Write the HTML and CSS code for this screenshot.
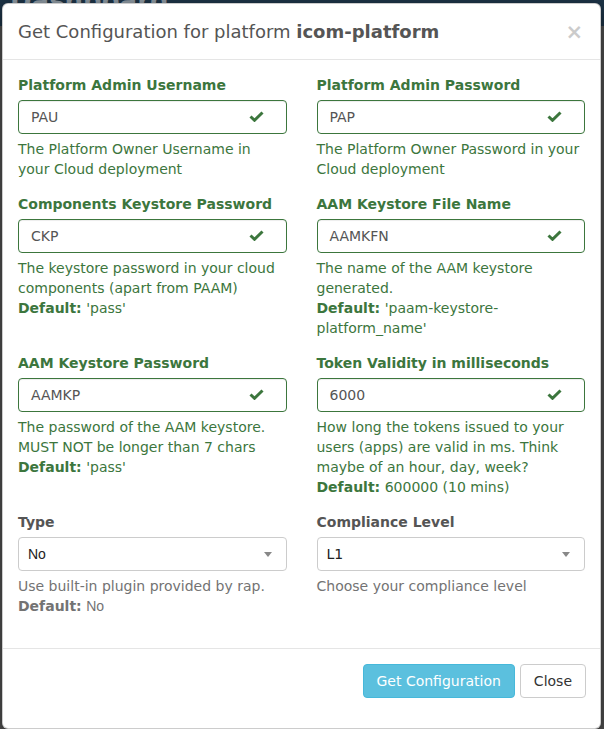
FILE: index.html
```html
<!DOCTYPE html>
<html>
<head>
<meta charset="utf-8">
<link rel="stylesheet" href="styles.css">
</head>
<body>
<div class="page">
  <div class="topbar"><span class="brand">Dashboard</span></div>
</div>
<div class="modal">
  <div class="modal-header">
    <h4 class="modal-title">Get Configuration for platform <b>icom-platform</b></h4>
    <span class="close">×</span>
  </div>
  <div class="modal-body">
    <div class="row">
      <div class="group success">
        <label>Platform Admin Username</label>
        <div class="field"><div class="input">PAU</div><svg class="ok" viewBox="0 0 15 11"><path d="M1.5 5.5 L5.5 9.3 L13.5 1.5"/></svg></div>
        <p class="help">The Platform Owner Username in your Cloud deployment</p>
      </div>
      <div class="group success">
        <label>Platform Admin Password</label>
        <div class="field"><div class="input">PAP</div><svg class="ok" viewBox="0 0 15 11"><path d="M1.5 5.5 L5.5 9.3 L13.5 1.5"/></svg></div>
        <p class="help">The Platform Owner Password in your Cloud deployment</p>
      </div>
    </div>
    <div class="row">
      <div class="group success">
        <label>Components Keystore Password</label>
        <div class="field"><div class="input">CKP</div><svg class="ok" viewBox="0 0 15 11"><path d="M1.5 5.5 L5.5 9.3 L13.5 1.5"/></svg></div>
        <p class="help">The keystore password in your cloud components (apart from PAAM)<br><b>Default:</b> 'pass'</p>
      </div>
      <div class="group success">
        <label>AAM Keystore File Name</label>
        <div class="field"><div class="input">AAMKFN</div><svg class="ok" viewBox="0 0 15 11"><path d="M1.5 5.5 L5.5 9.3 L13.5 1.5"/></svg></div>
        <p class="help">The name of the AAM keystore generated.<br><b>Default:</b> 'paam-keystore-platform_name'</p>
      </div>
    </div>
    <div class="row">
      <div class="group success">
        <label>AAM Keystore Password</label>
        <div class="field"><div class="input">AAMKP</div><svg class="ok" viewBox="0 0 15 11"><path d="M1.5 5.5 L5.5 9.3 L13.5 1.5"/></svg></div>
        <p class="help">The password of the AAM keystore. MUST NOT be longer than 7 chars<br><b>Default:</b> 'pass'</p>
      </div>
      <div class="group success">
        <label>Token Validity in milliseconds</label>
        <div class="field"><div class="input">6000</div><svg class="ok" viewBox="0 0 15 11"><path d="M1.5 5.5 L5.5 9.3 L13.5 1.5"/></svg></div>
        <p class="help">How long the tokens issued to your users (apps) are valid in ms. Think maybe of an hour, day, week?<br><b>Default:</b> 600000 (10 mins)</p>
      </div>
    </div>
    <div class="row">
      <div class="group">
        <label>Type</label>
        <div class="select"><span class="sel-val arial">No</span><span class="arrow"></span></div>
        <p class="help">Use built-in plugin provided by rap.<br><b>Default:</b> <span class="arial">No</span></p>
      </div>
      <div class="group">
        <label>Compliance Level</label>
        <div class="select"><span class="sel-val">L1</span><span class="arrow"></span></div>
        <p class="help">Choose your compliance level</p>
      </div>
    </div>
  </div>
  <div class="modal-footer">
    <button class="btn btn-info">Get Configuration</button>
    <button class="btn btn-default">Close</button>
  </div>
</div>
</body>
</html>
```
FILE: styles.css
```css
html, body {
  margin: 0;
  padding: 0;
}
body {
  background: #4f4f4f;
  font-family: "DejaVu Sans", sans-serif;
  font-size: 14px;
  line-height: 20px;
  color: #333;
  width: 604px;
  height: 729px;
  overflow: hidden;
  position: relative;
}
.topbar {
  background: #1d3346;
  height: 26px;
  padding-left: 10px;
  overflow: hidden;
}
.brand {
  display: block;
  font-size: 26px;
  line-height: 30px;
  font-weight: bold;
  color: #8c97a0;
  margin-top: -14px;
}
.modal {
  position: absolute;
  top: 3px;
  left: 2px;
  width: 597px;
  background: #fff;
  border: 1px solid rgba(0,0,0,0.2);
  border-radius: 6px;
  box-shadow: 0 5px 15px rgba(0,0,0,0.5);
}
.modal-header {
  display: flex;
  justify-content: space-between;
  align-items: flex-start;
  padding: 15px;
  border-bottom: 1px solid #e5e5e5;
}
.modal-title {
  margin: 0;
  font-size: 18px;
  line-height: 25px;
  font-weight: normal;
  color: #555;
}
.modal-title b {
  font-weight: bold;
}
.close {
  font-size: 21px;
  font-weight: bold;
  line-height: 1;
  color: #000;
  opacity: 0.2;
  margin-top: 3px;
  margin-right: 2px;
}
.modal-body {
  padding: 15px 15px 17px;
}
.row {
  display: grid;
  grid-template-columns: 1fr 1fr;
  column-gap: 30px;
}
.group {
  margin-bottom: 15px;
}
label {
  display: block;
  font-weight: bold;
  margin-bottom: 5px;
  color: #555;
}
.field {
  position: relative;
}
.input, .select {
  box-sizing: border-box;
  height: 34px;
  padding: 6px 12px;
  border: 1px solid #ccc;
  border-radius: 4px;
  color: #555;
  background: #fff;
}
.success label, .success .help {
  color: #3c763d;
}
.success .input {
  border-color: #3c763d;
  box-shadow: inset 0 1px 1px rgba(0,0,0,0.075);
}
.ok {
  position: absolute;
  right: 23px;
  top: 11px;
  width: 15px;
  height: 11px;
  fill: none;
  stroke: #3c763d;
  stroke-width: 3;
}
.select {
  display: flex;
  align-items: center;
  justify-content: space-between;
  padding: 6px 14px 6px 9px;
  color: #222;
}
.arial {
  font-family: "Liberation Sans", Arial, sans-serif;
}
.arrow {
  width: 0;
  height: 0;
  border-left: 4px solid transparent;
  border-right: 4px solid transparent;
  border-top: 5px solid #888;
}
.help {
  margin: 5px 0 0;
  color: #737373;
}
.help b {
  font-weight: bold;
}
.modal-footer {
  display: flex;
  justify-content: flex-end;
  gap: 5px;
  padding: 15px 14px 30px;
  border-top: 1px solid #e5e5e5;
}
.btn {
  font-family: "DejaVu Sans", sans-serif;
  font-size: 14px;
  line-height: 20px;
  height: 34px;
  padding: 6px 13px;
  border-radius: 4px;
  border: 1px solid transparent;
}
.btn-info {
  background: #5bc0de;
  border-color: #46b8da;
  color: #fff;
}
.btn-default {
  background: #fff;
  border-color: #ccc;
  color: #333;
}
```
